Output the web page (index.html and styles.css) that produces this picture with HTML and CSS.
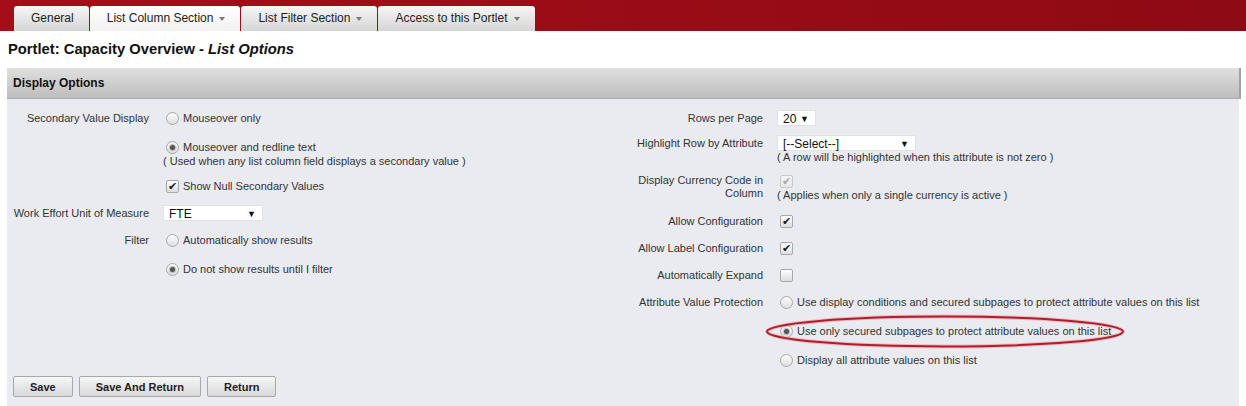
FILE: index.html
```html
<!DOCTYPE html>
<html lang="en">
<head>
  <meta charset="UTF-8">
  <title>List Options</title>
  <link rel="stylesheet" href="styles.css">
</head>
<body>
  <div class="topbar">
    <ul class="tabs">
      <li class="tab">General</li>
      <li class="tab active">List Column Section<span class="caret"></span></li>
      <li class="tab">List Filter Section<span class="caret"></span></li>
      <li class="tab">Access to this Portlet<span class="caret"></span></li>
    </ul>
  </div>

  <h1 class="title">Portlet: Capacity Overview - <em>List Options</em></h1>

  <div class="panel">
    <div class="panel-head">Display Options</div>
    <div class="panel-body">
      <div class="cols">
        <!-- left column -->
        <div class="col">
          <div class="row">
            <div class="label">Secondary Value Display</div>
            <div class="ctl">
              <div class="opt"><span class="radio"></span>Mouseover only</div>
              <div class="opt with-note"><span class="radio on"></span>Mouseover and redline text</div>
              <div class="note">( Used when any list column field displays a secondary value )</div>
              <div class="opt"><span class="check on"></span>Show Null Secondary Values</div>
            </div>
          </div>
          <div class="row">
            <div class="label">Work Effort Unit of Measure</div>
            <div class="ctl">
              <div class="select w-fte"><span>FTE</span><span class="arrow">&#9660;</span></div>
            </div>
          </div>
          <div class="row">
            <div class="label">Filter</div>
            <div class="ctl">
              <div class="opt"><span class="radio"></span>Automatically show results</div>
              <div class="opt"><span class="radio on"></span>Do not show results until I filter</div>
            </div>
          </div>
        </div>

        <!-- right column -->
        <div class="col">
          <div class="row tight">
            <div class="label">Rows per Page</div>
            <div class="ctl">
              <div class="select w-rows"><span>20</span><span class="arrow">&#9660;</span></div>
            </div>
          </div>
          <div class="row tight">
            <div class="label">Highlight Row by Attribute</div>
            <div class="ctl">
              <div class="select w-attr"><span>[--Select--]</span><span class="arrow">&#9660;</span></div>
              <div class="note">( A row will be highlighted when this attribute is not zero )</div>
            </div>
          </div>
          <div class="row">
            <div class="label two-line">Display Currency Code in Column</div>
            <div class="ctl">
              <div class="opt with-note"><span class="check on disabled"></span></div>
              <div class="note">( Applies when only a single currency is active )</div>
            </div>
          </div>
          <div class="row">
            <div class="label">Allow Configuration</div>
            <div class="ctl"><div class="opt"><span class="check on"></span></div></div>
          </div>
          <div class="row">
            <div class="label">Allow Label Configuration</div>
            <div class="ctl"><div class="opt"><span class="check on"></span></div></div>
          </div>
          <div class="row">
            <div class="label">Automatically Expand</div>
            <div class="ctl"><div class="opt"><span class="check"></span></div></div>
          </div>
          <div class="row">
            <div class="label">Attribute Value Protection</div>
            <div class="ctl">
              <div class="opt"><span class="radio"></span>Use display conditions and secured subpages to protect attribute values on this list</div>
              <div class="opt marked">
                <span class="radio on"></span>Use only secured subpages to protect attribute values on this list
                <svg class="ring" width="361" height="35" viewBox="0 0 361 35">
                  <ellipse cx="180" cy="17.5" rx="178" ry="15" fill="none" stroke="#f2b8bd" stroke-width="4"/>
                  <ellipse cx="180" cy="17.5" rx="178" ry="15" fill="none" stroke="#ad1f2c" stroke-width="2"/>
                </svg>
              </div>
              <div class="opt"><span class="radio"></span>Display all attribute values on this list</div>
            </div>
          </div>
        </div>
      </div>

      <div class="buttons">
        <button class="btn">Save</button>
        <button class="btn">Save And Return</button>
        <button class="btn">Return</button>
      </div>
    </div>
  </div>
</body>
</html>
```

FILE: styles.css
```css
body {
  margin: 0;
  background: #fff;
  font-family: 'Liberation Sans', Arial, sans-serif;
  font-size: 11px;
  color: #222;
}
.topbar {
  height: 31px;
  background: linear-gradient(to right, #a50e19, #8e0a14);
  padding-left: 14px;
  box-sizing: border-box;
  display: flex;
  align-items: flex-end;
}
.tabs {
  list-style: none;
  margin: 0;
  padding: 0;
  display: flex;
  gap: 1px;
}
.tab {
  height: 25px;
  line-height: 25px;
  padding: 0 15px 0 17px;
  font-size: 12px;
  color: #222;
  background: linear-gradient(#f6f6f6, #d5d5d5);
  border-radius: 3px 3px 0 0;
  display: flex;
  align-items: center;
}
.tab.active {
  background: linear-gradient(#ffffff, #f1f1f1);
}
.caret {
  display: inline-block;
  width: 0;
  height: 0;
  margin-left: 6px;
  border-left: 3.5px solid transparent;
  border-right: 3.5px solid transparent;
  border-top: 4px solid #7a7a7a;
}
.title {
  margin: 9px 0 10px 8px;
  font-size: 14.75px;
  line-height: 18px;
  font-weight: bold;
  color: #111;
}
.title em {
  font-style: italic;
}
.panel {
  margin: 0 7px;
}
.panel-head {
  height: 30px;
  line-height: 30px;
  padding-left: 6px;
  font-size: 12px;
  font-weight: bold;
  color: #111;
  background: linear-gradient(#e0e0e0, #bdbdbd);
  border-bottom: 1px solid #adadad;
  border-right: 2px solid #a3a3a3;
  margin-right: -2px;
}
.panel-body {
  background: #e9ebf0;
  padding: 11px 6px 12px;
}
.cols {
  display: flex;
}
.col {
  flex: 1;
}
.col + .col {
  padding-left: 8px;
}
.row {
  display: flex;
  margin-bottom: 11px;
}
.row.tight {
  margin-bottom: 9px;
}
.col .row:last-child {
  margin-bottom: 0;
}
.label {
  width: 136px;
  flex-shrink: 0;
  text-align: right;
  line-height: 16px;
  color: #333;
}
.label.two-line {
  line-height: 13px;
  padding-top: 1px;
}
.ctl {
  margin-left: 14px;
}
.opt {
  position: relative;
  height: 16px;
  display: flex;
  align-items: center;
  white-space: nowrap;
  color: #333;
  margin-bottom: 13px;
}
.opt:last-child,
.opt.with-note {
  margin-bottom: 0;
}
.radio, .check {
  display: inline-block;
  width: 11px;
  height: 11px;
  margin: 0 4px 0 3px;
  border: 1px solid #a9a9a9;
  background: linear-gradient(#fdfdfd, #dedede);
  box-sizing: content-box;
  position: relative;
  flex-shrink: 0;
}
.radio {
  border-radius: 50%;
}
.radio.on::after {
  content: "";
  position: absolute;
  left: 3px;
  top: 3px;
  width: 5px;
  height: 5px;
  border-radius: 50%;
  background: #555;
  box-shadow: 0 0 1px 1px #bbb;
}
.check {
  border-radius: 2px;
}
.check.on::after {
  content: "\2714";
  position: absolute;
  left: 1px;
  top: -2px;
  font-size: 11px;
  line-height: 14px;
  color: #222;
}
.check.disabled {
  border-color: #c9c9c9;
  background: linear-gradient(#f4f4f4, #e6e6e6);
}
.check.disabled::after {
  color: #a8a8a8;
}
.note {
  line-height: 13px;
  color: #333;
  white-space: nowrap;
}
.opt + .note {
  margin-bottom: 10px;
}
.ctl .note:last-child {
  margin-bottom: 0;
}
.select {
  height: 16px;
  line-height: 16px;
  background: #fff;
  border: 1px solid #e2e2e2;
  box-sizing: border-box;
  padding: 0 6px 0 5px;
  display: flex;
  justify-content: space-between;
  font-size: 12px;
  color: #111;
}
.select .arrow {
  font-size: 9px;
  color: #111;
}
.w-fte { width: 100px; }
.w-rows { width: 39px; }
.w-attr { width: 139px; }
.ring {
  position: absolute;
  left: -12px;
  top: -9px;
  pointer-events: none;
}
.buttons {
  display: flex;
  gap: 6px;
  margin-top: 8px;
}
.btn {
  height: 21px;
  padding: 0 16px;
  font-family: 'Liberation Sans', Arial, sans-serif;
  font-size: 11px;
  font-weight: bold;
  color: #222;
  background: linear-gradient(#f6f6f6, #d8d8d8);
  border: 1px solid #a8a8a8;
  border-radius: 2px;
}
```
